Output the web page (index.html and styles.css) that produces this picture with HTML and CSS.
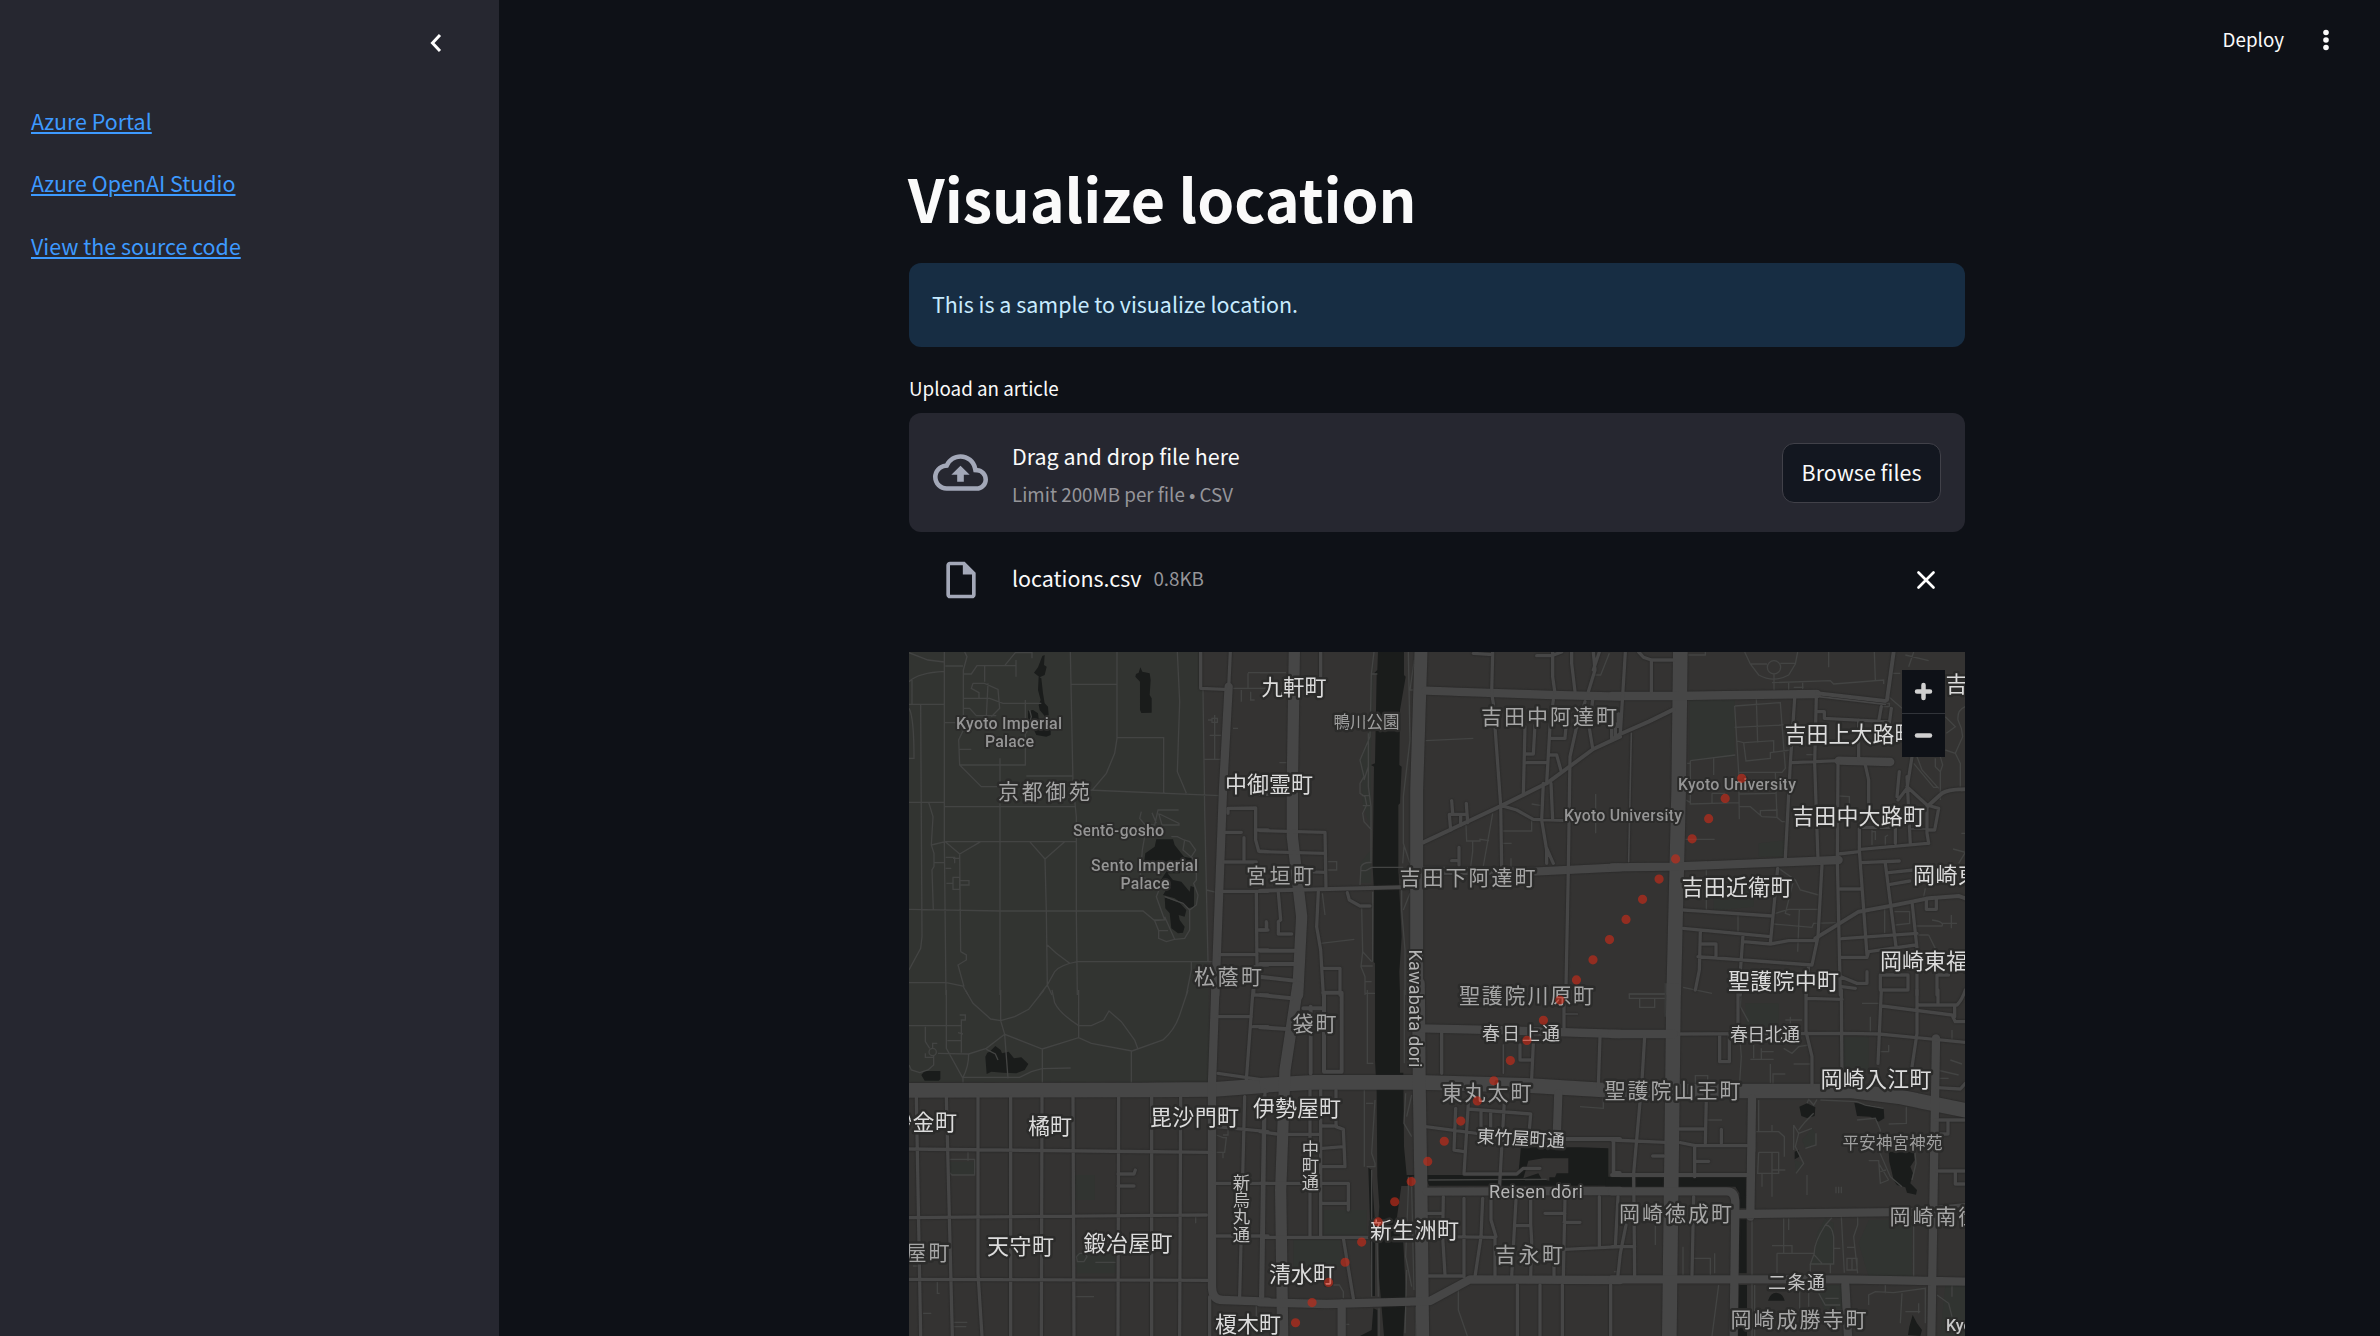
FILE: index.html
```
<!DOCTYPE html>
<html lang="en">
<head>
<meta charset="utf-8">
<title>Visualize location</title>
<link rel="stylesheet" href="styles.css">
</head>
<body>
<aside class="sidebar">
  <button class="collapse" aria-label="Collapse sidebar">
    <svg width="12" height="20" viewBox="0 0 12 20"><path d="M10 2L2.500 10L10 18" /></svg>
  </button>
  <nav class="links">
    <a href="#">Azure Portal</a>
    <a href="#">Azure OpenAI Studio</a>
    <a href="#">View the source code</a>
  </nav>
</aside>
<main class="main">
  <header class="toolbar">
    <span class="deploy">Deploy</span>
    <svg class="dots" width="8" height="24" viewBox="0 0 8 24"><circle cx="4" cy="4.500" r="2.800"/><circle cx="4" cy="12" r="2.800"/><circle cx="4" cy="19.500" r="2.800"/></svg>
  </header>
  <section class="content">
    <h1>Visualize location</h1>
    <div class="info">This is a sample to visualize location.</div>
    <div class="label">Upload an article</div>
    <div class="dropzone">
      <svg class="cloud" width="55" height="55" viewBox="0 0 24 24"><path d="M19.350 10.040A7.490 7.490 0 0 0 12 4C9.110 4 6.600 5.640 5.350 8.040A5.994 5.994 0 0 0 0 14c0 3.310 2.690 6 6 6h13c2.760 0 5-2.240 5-5 0-2.640-2.050-4.780-4.650-4.960zM19 18H6c-2.210 0-4-1.790-4-4 0-2.050 1.530-3.760 3.560-3.970l1.070-.11.500-.95A5.469 5.469 0 0 1 12 6c2.620 0 4.880 1.860 5.390 4.430l.3 1.500 1.530.11A2.980 2.980 0 0 1 22 15c0 1.650-1.350 3-3 3zM8 13h2.550v3h2.900v-3H16l-4-4z"/></svg>
      <div class="drop-text">
        <span class="drop-title">Drag and drop file here</span>
        <span class="drop-limit">Limit 200MB per file • CSV</span>
      </div>
      <button class="browse">Browse files</button>
    </div>
    <div class="file">
      <svg class="doc" width="44" height="44" viewBox="0 0 24 24"><path d="M14 2H6c-1.100 0-2 .9-2 2v16c0 1.100.9 2 2 2h12c1.100 0 2-.9 2-2V8l-6-6zM6 20V4h7v5h5v11H6z"/></svg>
      <span class="file-name">locations.csv</span>
      <span class="file-size">0.8KB</span>
      <svg class="close" width="20" height="20" viewBox="0 0 20 20"><path d="M2.500 2.500L17.500 17.500M17.500 2.500L2.500 17.500"/></svg>
    </div>
    <div class="map">
      <svg class="tiles" width="1056" height="684" viewBox="909 652 1056 684">
        <path class="park" d="M909 652H1200L1203 690L1204 795L1208 963L1210 1082H909z"/>
        <path class="park soft" d="M1374 652L1368 737L1360 760L1363 806L1371 830V883H1360V863L1371 850V750z"/>

        <g transform="translate(908 650) scale(.33333)">
          <path class="water" d="M403 18L410 15L408 45L416 50L410 75L395 82L378 68L390 52zM392 80L400 85L405 130L410 160L420 170L422 195L412 200L395 180L392 165L398 150L390 120zM360 182L375 180L390 190L392 205L428 215L428 255L415 260L385 255L378 240L365 225L360 210zM697 52L703 65L725 70L728 90L725 135L731 145V188L700 189L696 180V95L682 80L684 72L692 68zM745 568H795L800 585L828 620L850 625L852 640L820 645L815 670L775 670V645L708 640L712 610L740 590zM775 665L795 690L820 695L845 725L848 708L858 712V770L840 775L800 745L765 735L780 710L755 695zM770 742L815 758L835 780L830 800L812 795L815 810L830 830L825 848L810 850L790 835L785 790L772 775z"/>
          <path class="trail" d="M109 6V575L114 1035M3 8L60 30L109 36M3 95Q30 68 109 64M12 90V163M3 163H109M38 165L42 860L38 895L3 960M3 457H109M62 457L75 500L70 585L78 610V650L72 660L76 780M109 470H503M109 218H150M3 175Q18 200 18 325H3M170 6L177 20L166 60V240L152 270L155 345L220 410H276M166 72H190L207 47H325M324 30V80M290 47L322 8H372V25M166 145H245L285 160H400M195 100H230L270 118L275 175L250 200M240 100L235 200M195 100L190 115L213 128V145M166 175H185L205 197H265M230 47V95M155 345H352V150M355 378H493M276 325V1035M487 6L495 400L505 500V790L508 1035M487 103H627M627 6V265L620 310L595 370L553 420M627 263H767V430M808 6L815 155L808 365L835 430M540 420L935 437M885 120L890 480L900 935M112 575H505M112 575L155 612L218 575M365 575L411 627L470 575M411 627L415 783L418 1010M155 612L158 905M70 585L112 575M3 778L280 783L705 783L738 810H770M158 905L175 915V930L150 945L168 1010M3 998H115L165 1008L180 1035M418 885L445 910L485 940M508 935H920M395 1035L418 1005L440 965Q455 945 508 935M418 1005L432 1035M850 937V960L835 1035M700 485L695 505L712 525H740L750 480H812M732 488L745 520M755 492L813 520V525H762L752 490M710 560L703 600L697 675L755 715L745 740L770 810L740 812L752 842V865L775 875L800 868L770 800M752 842H780M800 868L830 865L845 840V780L865 765L870 735L857 700L865 690V640L850 620L863 600L845 575L828 570L808 560H790M770 740L825 760L845 780M830 570L825 600L850 622M355 250L370 200L365 180M113 655H130M113 622H140V640M135 625H155M80 638H109M115 700H135V718H155V682H135V700M155 692H183V705H155M112 48H165M155 298H190M895 720L925 727M890 328H940M905 256H940M920 195V328M900 210H912M912 205h16v12h-16zM975 235H990M1020 70V115M1020 68H1080M975 115H1080M1000 120V155M1028 125V150H1040"/>
        </g>

        <g transform="translate(1260 650) scale(.33333)">
          <path class="water" d="M354 6H432V75L437 80L420 180L418 345L425 350L420 460L415 465V650L418 722L425 860L418 965L420 1035H345V940L340 935L342 722L338 650L342 350L333 345L345 340L350 75L342 70L352 60z"/>
          <path class="trail" d="M0 68H78M58 338H80M203 635H230V660H203M187 730L195 795M182 880L283 868M342 6L334 72H352M334 72L330 260L300 330L312 380L300 400V430L315 440L320 465L308 490L312 515L335 540M325 350L312 390M325 250V410L333 470V635M300 705L303 650Q310 635 335 638M335 652H430M335 652L318 662H303M305 775L308 905L335 935M308 905L303 950L315 980V1035M338 725V935M303 948H338M315 995H335M305 437H330M308 467H330M445 6L450 270L430 440V580L450 640M463 30L450 120H465M432 590L428 640M425 720V780L435 900V1035M430 780L450 730M497 272L640 265M618 525L620 573H660V568L687 572M638 575V605L632 650M698 490L670 648M728 543H815V510M815 462L845 467M728 580H755M753 625V650M1007 432V550M1048 10L1022 75H1005"/>
        </g>

        <g transform="translate(1612 650) scale(.33333)">
          <path class="park soft" d="M232 150H368V320L232 332zM305 705L425 700V770L305 782zM440 580L520 570V620H440z"/>
          <path class="trail" d="M368 168L505 158L520 355L510 367H380L368 168M368 232L515 225M433 145L437 278M372 272L395 278L402 333L475 325V308L535 300M397 278L485 272V305M235 332L370 315M235 332V462L380 458M305 322V375M300 430V458M300 430H340M380 368L382 508M382 470L415 470L450 500L495 502V480L445 482V495M382 432L490 430M490 367L495 502L510 515H520M220 568H308M225 340H235M222 450L235 458M398 6L415 42L440 75Q485 100 530 75L550 42L557 6M415 42H465M505 40H550M466 52a20 20 0 1 0 40 0a20 20 0 1 0-40 0M486 72V120M480 98L655 92L665 102L815 90V102M530 98V120M572 98V118M545 112H575M650 6V52M787 6L790 90M228 15H280V6M905 6L890 50M880 15L950 32M583 314H610M1060 170Q1035 180 1038 210L1048 235L1052 260L1030 310L1045 340V410M1000 200L1030 230L1003 250M1000 300L1030 310M915 320L930 360L980 415M905 340L965 412H980M970 325V350L985 365L992 345L985 320M985 365V450M780 540V585M780 545H790V570M820 585V560L828 555M680 438L712 440V470M283 660V780M378 795V845M500 655L550 690L565 720L620 735M545 690L520 790L535 795M485 822L600 832L605 820L680 818M562 780L557 905M490 790L530 778H620M818 775V850M847 785H893V820L850 825M940 715L935 740M910 828H990Q998 815 960 810M1018 795V835M990 820H1035M950 855L970 895V940M915 855L950 855M1023 597L1060 607M1048 550H1060M1060 607L1040 640M50 1032H165M165 1000V1035M213 1012L300 1030M835 70H865M830 140L870 175M810 160h22v10h-22z"/>
        </g>

        <g transform="translate(908 990) scale(.33333)">
          <path class="park soft" d="M125 515H200V555H125zM505 790H623V850H505zM500 555H560V630H500z"/>
          <path class="water" d="M232 200L238 188L245 185L262 168L278 180L282 190L302 185L318 205L340 202L361 222L350 240L325 250L285 248L250 245L236 252zM40 255L50 243H97V268L92 272H50z"/>
          <path class="trail" d="M115 0V175L165 265V278M172 0L195 40L248 87L278 92L320 80L362 58L408 0M278 0V92L290 133L300 265M3 107H162M155 75H172V90H160V188M118 152H160M90 190L182 192L235 175L290 133L403 177L512 143L550 160L672 183L765 150Q800 120 815 75L840 0M182 192Q182 230 165 262H335L370 245L402 236L488 234M403 177V278M432 0L440 38Q455 70 512 107H550L587 90L603 63L640 95L680 150L690 178M512 0V143M670 183V278M52 110V155L65 175M63 186a11 11 0 1 0 22 0a11 11 0 1 0-22 0M74 175V160H88M77 197V225L60 240L35 248L10 240L3 225M52 190V202H75M150 128L165 132M235 178L262 192L270 210M122 508H200V555H132L122 545zM180 485V512M505 800L515 790H530L537 800L528 815H508zM562 817H623M500 920H558M88 875V910H95M15 828H35M45 970H70M135 997H178M135 1010H175M863 680V700M945 435H960V418M925 435L945 443H955L950 487H925M945 487V505M1045 945V980H1080"/>
        </g>

        <g transform="translate(1260 990) scale(.33333)">
          <path class="park soft" d="M190 660H320V735H190zM100 750H240V830H100z"/>
          <path class="water" d="M345 0H420V248H430L432 470L440 555H455V588H424L410 688L430 760L438 918L435 955L430 1038H372L362 918L357 860L355 690L358 650L352 560L350 305L345 210zM325 533L335 540L345 700V918H335L330 690zM340 955L352 960V1038H300L335 1020zM440 555H775L783 470L785 472H960L1045 475V560L1080 562V587H507L500 570z"/>
          <path class="land" d="M805 512L850 505H925V550H890L885 562H868L868 572L845 568L835 550L790 565L800 530z"/>
          <path class="trail" d="M322 0V220H340M315 10H345M313 300V530M318 340H340M345 330L335 490L345 520V530H320M433 0V220M437 310L432 400L455 440M455 315L440 380M455 590L462 900M445 560V600L437 800L455 890M440 840L435 1030M467 950V1038M220 885H238L250 905V925M258 1003H268M960 350L1030 355V320M335 540V920M350 700L355 920M357 955V1038M595 900V960L622 1038M1062 845H1078M1070 845V858M505 570L860 568"/>
        </g>

        <g transform="translate(1612 990) scale(.33333)">
          <path class="park soft" d="M770 690H900V860H770L740 760zM640 685L665 700V825H595L610 780L615 730zM1000 885H1060V1038H985zM570 450L600 415L612 430V465L580 475zM695 140H770V240H695zM610 885H690V1000H650zM400 40H500V110H400zM548 510L575 520L552 548z"/>
          <path class="water" d="M-20 562H402V655H382V610L370 590H-20zM382 688H404V850H380zM380 885H405V1038H378zM562 350L585 340L610 352L608 378L585 384L568 378zM727 338L775 345L815 355L817 385L800 395L775 380L735 378zM548 485L560 480L562 500L548 508zM830 485H905L908 510L895 530L903 550L895 580L915 600L912 614L885 608L880 592L855 585L845 570L838 540L832 515zM800 428L820 430L822 450L805 455zM468 932Q475 908 493 908Q512 910 518 932zM888 1035L892 1010L902 975L915 1000L930 1020L925 1038z"/>
          <path class="trail" d="M52 12H160M52 12V25H160M83 25V52H128V25M160 -20V80M320 885L300 1038M213 770V855M245 805H295V855M308 790V850M130 700V765M285 390H330M250 285V257H287V280M420 685V1038M428 885V1038M440 330V425M430 425H500L517 440V500M430 425V485M440 487H500V550H437L440 487M480 487V620M450 550V590M480 405V425M585 555V615M480 540H520M545 405L560 430L550 470L575 520L552 550M560 420L580 395L605 370M545 405V480M560 430L600 415M612 430V465L580 475M625 330L735 335L760 345L815 355M585 340L590 328L605 345L615 328M883 350V400L830 402M735 390L790 385L805 420L800 480L835 560L870 590M770 512H800L805 580L830 570M800 520L830 570M805 545L822 540M905 440L912 520L900 570M905 680V860M515 685V790M530 685V720M480 767H540V790M495 790H605M495 790V850M660 683L640 705Q605 760 607 790L595 822H665V740Q660 705 640 705M595 822V850M655 822V850M688 680L697 848M737 680V705L725 740L737 850M665 775H685M705 772H728M705 805H735V840H705zM720 805V840M607 795L630 820M620 910L640 945H685M640 925H680M645 960H690M563 885V1000M590 885V950M770 945V915L790 905L845 908L940 895V1000M820 885V910M870 910L865 1000M880 965H925M920 940V970M975 915L1010 940L1020 980M1020 885V920M388 0L385 50L410 95M385 160L388 200L382 290M415 208H485M425 165V205M448 175V208M450 185H485M475 222V280M483 285V252H520M520 90H570M535 80V105M515 175L540 190L560 170L590 165M545 222H595M750 40H800M775 80V125M830 165V185H805M1020 120V150M975 240L1040 255M1015 210L1050 222M980 265H1010M672 590V610M680 590V610M688 590V610"/>
        </g>

        <g class="streets">
        <g transform="translate(908 650) scale(.33333)">
          <path class="w24" d="M962 110L945 420L922 1035"/>
          <path class="w10" d="M967 6L962 115M878 6V115L950 118M960 490V475L1043 474V570L1052 603L1080 605M950 547H1000M1008 563V635M948 636H1045M1043 540H1080M940 724H1080M1045 730L1047 960M1047 840H1080M1075 815V840M935 914H1047M1047 900H1080M1047 945H1080M1045 983H1080M1040 950L1037 1035"/>
        </g>
        <g transform="translate(1260 650) scale(.33333)">
          <path class="w38" d="M483 6L470 420V1035"/>
          <path class="w34" d="M103 6L97 400V560L125 800L113 1035"/>
          <path class="w24" d="M497 122L880 135L1080 140M490 662L820 665L1080 652"/>
          <path class="w12" d="M0 722L480 710M0 902H105M0 942H105M0 980L105 992M490 577L725 467L860 400L1000 297L1080 260"/>
          <path class="w10" d="M182 6V80M0 433H80M0 542L195 547L198 715M0 605L195 610M135 665L195 667M55 728L62 810L55 815V852H95M0 840H20V818M175 725L170 830L182 900L190 1035M190 955H240V1035M190 1028H240M262 728L268 750L300 768H330M698 6L695 130L700 160L705 230L722 465L725 650M640 10L698 14M878 6V80L885 130M830 17H875L905 6M935 6V40L945 125M1000 6L1005 60L985 125M1018 6L1000 60M880 150L870 230L860 400M795 230L790 435M825 225L820 312H795M800 338H860M918 230L915 265H870M865 315H890L903 362M950 230L930 320L925 660L918 1010M975 155L950 235M998 150L988 235L998 295M1055 230V265M1075 190V230M725 467L770 480L820 508L930 512M850 400L845 510L860 600V640M858 590L880 640M873 400L878 508M575 452L578 490L568 495L572 540M619 460L623 518M568 493H620M602 495V525M597 592V645M575 632H597"/>
        </g>
        <g transform="translate(1612 650) scale(.33333)">
          <path class="w44" d="M205 6L200 420L185 1035"/>
          <path class="w24" d="M0 138H180L615 132M0 652L180 650L680 630M680 332L835 336"/>
          <path class="w12" d="M0 268L25 252L110 215L185 178M615 130L820 153M845 6L825 150M945 470L990 430Q1010 418 1060 418M610 865L740 785L850 765L950 745L1040 738L1060 745"/>
          <path class="w10" d="M40 6L25 250M118 30V125M80 6L95 22L118 30H185M10 220V260M548 145L535 340L520 625M613 140L608 340L618 630M615 185H637V205L825 215M808 170L800 215M838 175L832 220M740 210V330M540 338L680 332M760 345L770 390V470M678 340L676 630L685 1035M862 365L855 440M900 320L885 415L858 450M885 380L895 585M885 410L945 465V550L950 580M945 465L980 475L968 540H950M745 532H850V580M745 598L945 580M680 612L742 605V535M742 600L765 915M748 638L862 633M820 640L852 890M830 668L905 660M835 703L893 693M685 717H745M943 745V778H973V745M900 755L915 895M690 866L915 850M685 922H765L770 905L910 885M215 780L480 798M497 655L475 880M630 645L618 860L600 945M213 835L475 860M395 875L475 882L530 872H610M265 845L262 960L250 1020M265 882H312V918M258 920L600 945M393 855L385 965V1035M590 945L583 1035M685 980L735 1000H765V965M805 975H888V1020H805zM690 1010L730 1015M915 900V1035M975 1035V975H1010"/>
          <path class="w5" d="M58 250L50 635M895 537H945M620 140L820 163"/>
        </g>
        <g transform="translate(908 990) scale(.33333)">
          <path class="w44" d="M3 301L700 300L920 298L1080 286"/>
          <path class="w24" d="M922 0L912 280V890Q912 930 945 930L1080 935"/>
          <path class="w10" d="M905 920V1038M25 320L38 1038M115 320L133 1038M210 320V850L222 1038M308 320V1038M402 320L400 1038M495 320L498 1038M632 320L630 1038M731 320V1038M818 320L815 1038M3 477L910 487M3 683L895 675M3 868L900 871M630 552H678L682 540M630 588H678M930 80H1030M1035 0L1015 270M1035 110H1080M1040 15H1080M930 250L1080 272M1010 320L995 920M925 410L1080 425M1068 320L1058 920M922 580H1080M922 738H1080"/>
        </g>
        <g transform="translate(1260 990) scale(.33333)">
          <path class="w44" d="M0 286L160 277L480 277L800 286L1080 303"/>
          <path class="w38" d="M475 -20L478 300L483 600L488 1038"/>
          <path class="w34" d="M113 -10L75 240L62 600L68 1038"/>
          <path class="w24" d="M0 937L200 942L510 933L630 868L1080 870M245 940V1038M485 115L700 120L1080 132M895 310L890 445M500 605L1080 603"/>
          <path class="w12" d="M0 15L95 25M0 112L80 117M190 8H245V245H192V8M152 50V250M130 55H190M915 447H1080"/>
          <path class="w10" d="M228 300V410L250 418L255 530H187M187 408H230M187 475L250 470M182 300V740M150 300V740M80 433H182M0 425L50 432M0 580L265 580V660M187 640H265M5 742H325M250 745L280 925M15 300L8 920M545 125V250M780 165V210H815M820 160L815 265M1020 140L1015 290M912 0V115M497 410L650 430M587 355L582 480L612 485M625 340L612 552H770L790 535H840M625 357L812 372L808 420M663 365V415M692 368V410M733 335L718 600M1060 450V548H1080M550 620L548 740L555 855M500 670H545M612 625V860M668 625L663 740L645 860M545 740L705 742V860M693 625V690L708 740M768 630L755 860M812 630V700L815 755L812 860M768 707H812M855 670H915M915 625L910 860M912 697H960M915 778L1080 770M1018 620V770M505 858H610M882 820V860M772 885V1038M840 885V1038M907 885V1038M1052 885V1038"/>
          <path class="w5" d="M730 165V250M912 72H952"/>
        </g>
        <g transform="translate(1612 990) scale(.33333)">
          <path class="w44" d="M185 -20L180 400L172 1038M0 303H378L720 303L860 320L1080 365"/>
          <path class="w24" d="M0 132H185M972 145L958 1038M420 325L415 680M0 604H345Q370 604 370 640L365 1038M385 672L960 665M0 868L700 868L1060 875M700 885L708 1038"/>
          <path class="w12" d="M960 655L1060 645M0 555H405"/>
          <path class="w10" d="M200 132L700 130L800 132L1060 157M378 0V105M323 135V215H352V135M582 0V125L600 200V285M688 0L690 285M808 0L798 220M585 25L690 28M810 48L1020 75L1030 95H1060M915 0V130L900 230M920 45H1035Q1050 30 1060 0M978 0V42M1028 50V80M975 293L1045 297L1060 280M98 140L90 270M85 325L65 550L68 860M283 325L280 460M200 417H280M205 458L250 467H405M248 470V560M250 514H290M328 418V460M0 450L160 457M5 455V545M122 498H155M18 620L10 770M42 705L25 790L18 855M0 770H68M245 620L240 855M970 390H1060M970 432H1008V395M975 543H1060M1030 545V582H1060"/>
        </g>
        </g>

        <g class="place big">
          <text x="1261.500" y="694.700" textLength="65">九軒町</text>
          <text x="1225" y="791.500" textLength="88">中御霊町</text>
          <text x="1945.500" y="691.700">吉</text>
          <text x="1784.500" y="741.500" textLength="132">吉田上大路町</text>
          <text x="1792" y="824" textLength="133">吉田中大路町</text>
          <text x="1681.500" y="894.500" textLength="111">吉田近衛町</text>
          <text x="1913" y="882.500" textLength="67">岡崎東</text>
          <text x="1880" y="969" textLength="88">岡崎東福</text>
          <text x="1728" y="989" textLength="111">聖護院中町</text>
          <text x="1253" y="1115.500" textLength="88">伊勢屋町</text>
          <text x="1370" y="1237.500" textLength="89">新生洲町</text>
          <text x="1269" y="1281.500" textLength="66">清水町</text>
          <text x="1215" y="1332" textLength="66">榎木町</text>
          <text x="1150" y="1124.500" textLength="89">毘沙門町</text>
          <text x="1028" y="1133.500" textLength="44">橘町</text>
          <text x="890" y="1129.500" textLength="67">砂金町</text>
          <text x="987" y="1254" textLength="67">天守町</text>
          <text x="1083.500" y="1250.500" textLength="89">鍛冶屋町</text>
          <text x="1820.500" y="1087" textLength="111">岡崎入江町</text>
        </g>
        <g class="place mid">
          <text x="998" y="798.500" textLength="92">京都御苑</text>
          <text x="1481" y="724" textLength="136">吉田中阿達町</text>
          <text x="1399.500" y="885" textLength="136">吉田下阿達町</text>
          <text x="1246" y="882.500" textLength="68">宮垣町</text>
          <text x="1194" y="983.500" textLength="68">松蔭町</text>
          <text x="1459" y="1002.500" textLength="135">聖護院川原町</text>
          <text x="1292.500" y="1030.500" textLength="44">袋町</text>
          <text x="1441.500" y="1099.500" textLength="90">東丸太町</text>
          <text x="1495" y="1261.500" textLength="68">吉永町</text>
          <text x="905.500" y="1259.500" textLength="44">屋町</text>
          <text x="1604.500" y="1097.500" textLength="136">聖護院山王町</text>
          <text x="1619" y="1220.500" textLength="113">岡崎徳成町</text>
          <text x="1889.500" y="1224" textLength="90">岡崎南御</text>
          <text x="1730.500" y="1326.500" textLength="136">岡崎成勝寺町</text>
        </g>
        <g class="place small">
          <text x="1333.500" y="727.500" textLength="66">鴨川公園</text>
          <text class="road" x="1482" y="1040" textLength="78">春日上通</text>
          <text class="road" x="1730" y="1041" textLength="70">春日北通</text>
          <text x="1842.500" y="1149" textLength="100">平安神宮神苑</text>
          <text class="road" x="1768" y="1288.500" textLength="57">二条通</text>
          <text class="road" transform="rotate(3 1476 1144)" x="1476.500" y="1142.500" textLength="88">東竹屋町通</text>
          <text class="road down" x="1310.300" y="1139.700">中町通</text>
          <text class="road down" x="1241.300" y="1173.500">新烏丸通</text>
        </g>
        <g class="place latin">
          <text x="956" y="729.300" textLength="106">Kyoto Imperial</text>
          <text x="985" y="747.300" textLength="49">Palace</text>
          <text x="1073" y="836" textLength="91">Sentō-gosho</text>
          <text x="1091" y="871.300" textLength="107">Sento Imperial</text>
          <text x="1120.500" y="889" textLength="49">Palace</text>
          <text x="1564" y="820.700" textLength="118">Kyoto University</text>
          <text x="1678" y="789.700" textLength="118">Kyoto University</text>
          <text class="lit" x="1946" y="1330.700">Kyoto</text>
          <text class="street" x="1489" y="1198.300" textLength="94">Reisen dōri</text>
          <text class="street" transform="translate(1408.500 949.500) rotate(90)" textLength="118">Kawabata dori</text>
        </g>
        <path class="points" d="M1741.700 778.300L1295.500 1322.800"/>
      </svg>
      <div class="zoom">
        <button aria-label="Zoom in"><svg width="43" height="43" viewBox="0 0 43 43"><path d="M15 21.500H28M21.500 15V28"/></svg></button>
        <button aria-label="Zoom out"><svg width="43" height="43" viewBox="0 0 43 43"><path d="M15 21.500H28"/></svg></button>
      </div>
    </div>
  </section>
</main>
</body>
</html>
```
FILE: styles.css
```
* { box-sizing: border-box; }
body {
  margin: 0;
  width: 2380px;
  height: 1336px;
  display: flex;
  overflow: hidden;
  background: #0e1117;
  color: #fafafa;
  font-family: "Noto Sans CJK JP", "Noto Sans", sans-serif;
  font-size: 21.450px;
}
button { padding: 0; border: 0; background: none; color: inherit; font: inherit; }
svg { display: block; flex: none; }

.sidebar { width: 499px; flex: none; background: #262730; padding: 33px 31px 0; }
.collapse { display: block; margin-left: 399px; }
.collapse path { fill: none; stroke: #fff; stroke-width: 3; }
.links { display: flex; flex-direction: column; align-items: flex-start; gap: 24px; margin-top: 49px; }
.links a {
  color: #3d9aff;
  line-height: 38.400px;
  text-decoration: underline;
  text-decoration-thickness: 2px;
  text-underline-offset: 2px;
}

.main { flex: 1; display: flex; flex-direction: column; }
.toolbar { height: 90px; display: flex; justify-content: flex-end; padding: 27px 50px 0 0; }
.deploy { font-size: 18.800px; line-height: 24px; margin-right: 38px; }
.dots { fill: #fafafa; margin-top: 1px; }

.content { width: 1056px; margin-left: 410px; display: flex; flex-direction: column; }
h1 { margin: 67px 0 0 -1px; height: 106px; font-size: 59.200px; line-height: 80px; font-weight: 700; white-space: nowrap; }
.info {
  height: 84px;
  padding: 0 23px;
  border-radius: 12px;
  background: #172d43;
  color: #c7ebff;
  line-height: 82px;
}
.label { height: 66px; padding-top: 28px; font-size: 18.800px; line-height: 26px; }
.dropzone { height: 119px; border-radius: 12px; background: #262730; display: flex; align-items: center; padding: 0 24px; }
.cloud, .doc { fill: #a3a8b8; }
.drop-text { flex: 1; display: flex; flex-direction: column; margin: 4px 0 0 24px; }
.drop-title { line-height: 39px; }
.drop-limit { font-size: 18.800px; line-height: 38px; color: #95959a; }
.browse {
  width: 159px;
  height: 60px;
  border: 1px solid #414149;
  border-radius: 12px;
  background: #131720;
  line-height: 54px;
  padding-bottom: 2px;
}
.file { height: 120px; display: flex; align-items: center; padding: 1px 29px 26px 30px; }
.file-name { margin: -5px 0 0 29px; }
.file-size { flex: 1; margin: -4px 0 0 12px; font-size: 18.800px; color: #95959a; }
.close { fill: none; stroke: #fff; stroke-width: 2.700; stroke-linecap: round; }

.map { position: relative; height: 684px; overflow: hidden; background: #343332; }
.park { fill: #323431; }
.park.soft { fill: #313431; }
.land { fill: #343332; }
.water { fill: #1a1c1b; }
.trail { fill: none; stroke: #434443; stroke-width: 4; }
.streets { filter: drop-shadow(0 0 1px #222); }
.streets path { fill: none; stroke: #464646; stroke-linecap: round; stroke-linejoin: round; }
.streets .w44 { stroke-width: 44; stroke-linecap: butt; }
.streets .w38 { stroke-width: 39; }
.streets .w34 { stroke-width: 34; }
.streets .w24 { stroke-width: 25; }
.streets .w12 { stroke-width: 12; }
.streets .w10 { stroke-width: 10; }
.streets .w5 { stroke-width: 5; }
.place { paint-order: stroke; stroke: #2b2b2a; stroke-width: 5px; stroke-linejoin: round; }
.big { font-size: 22px; fill: #dcdcdc; }
.mid { font-size: 21px; fill: #a6a6a6; }
.small { font-size: 16.500px; fill: #a0a0a0; }
.small .road { font-size: 18px; fill: #c4c4c4; }
.small .down { font-size: 17.300px; writing-mode: vertical-rl; }
.latin { font-family: Roboto, sans-serif; font-weight: 500; font-size: 16px; fill: #959595; stroke-width: 4px; }
.latin .street { font-size: 18px; font-weight: 400; fill: #b4b4b4; }
.latin .lit { fill: #c8c8c8; }
.points {
  fill: none;
  stroke: rgba(202, 42, 24, .63);
  stroke-width: 9.200;
  stroke-linecap: round;
  stroke-dasharray: 0 26.070;
}
.zoom { position: absolute; top: 18px; right: 20px; width: 43px; background: #0e1117; }
.zoom button { display: block; }
.zoom button + button { border-top: 1px solid #31343a; }
.zoom path { stroke: #d0d0d0; stroke-width: 4.500; stroke-linecap: round; }
```
